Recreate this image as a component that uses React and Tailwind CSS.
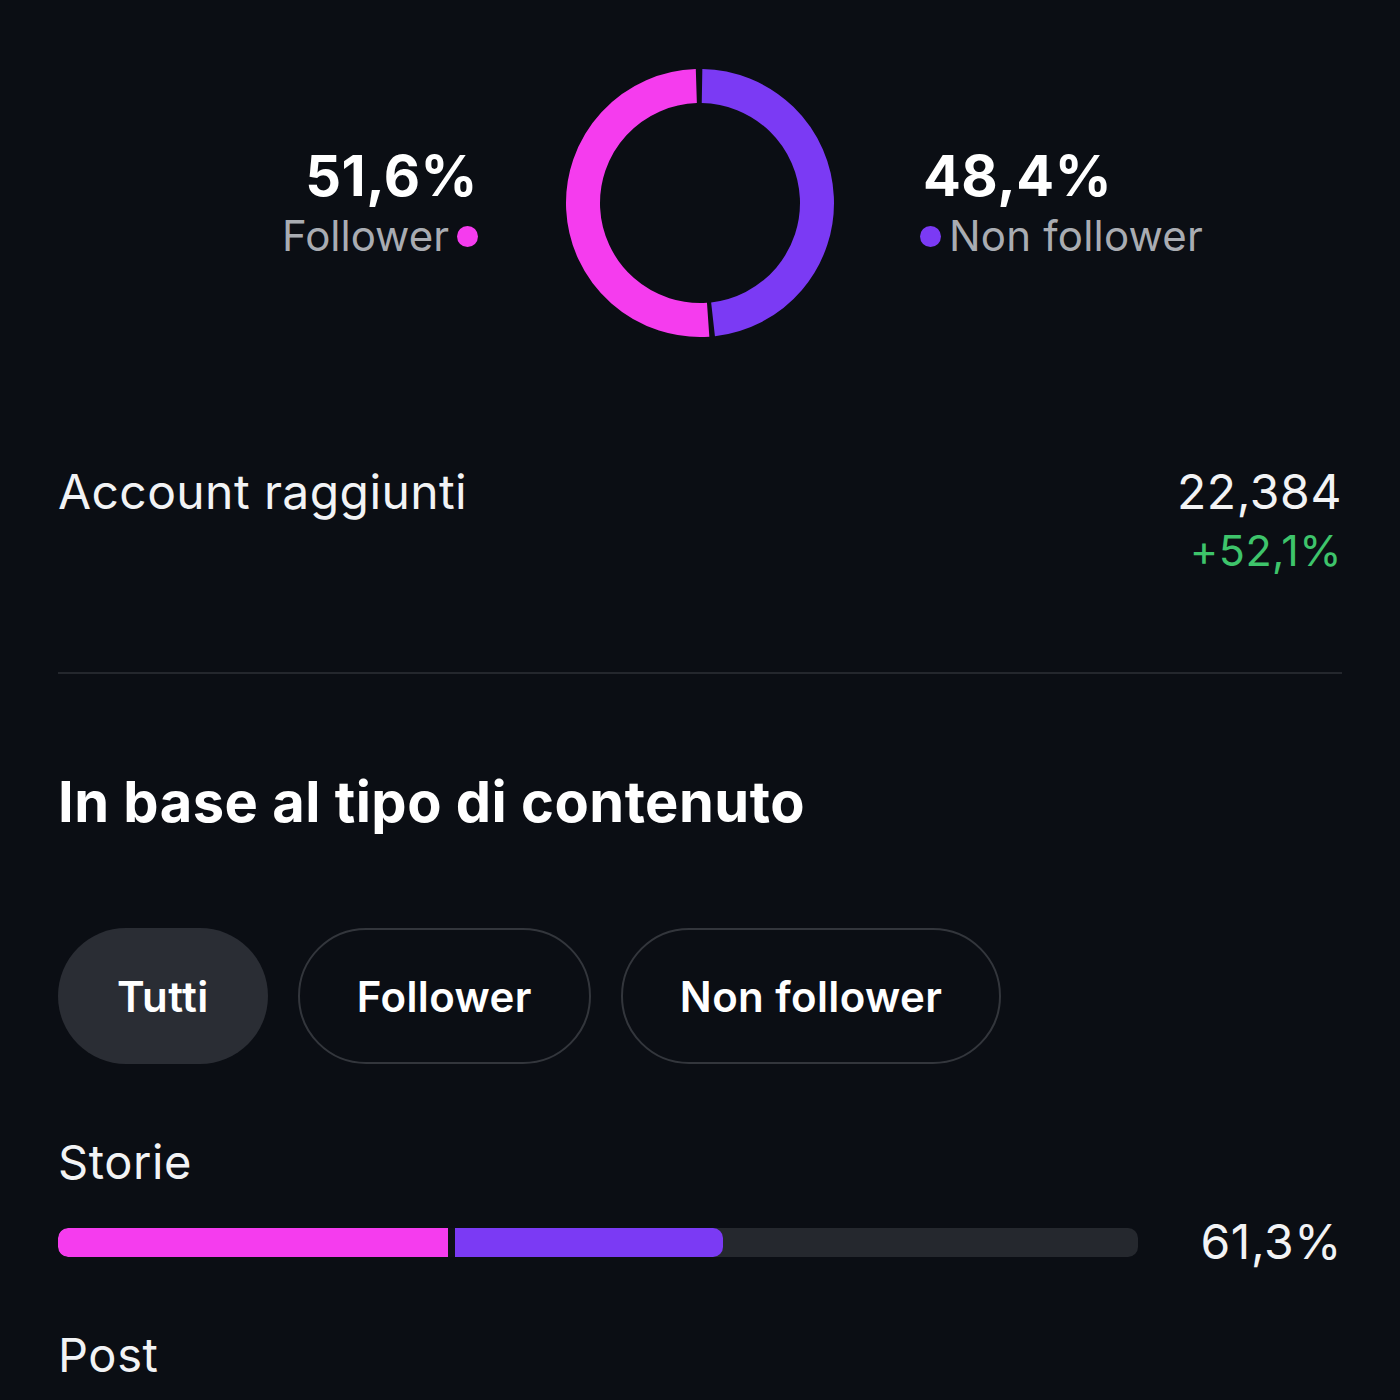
import React from 'react';

const FONT = { fontFamily: 'Inter, "Noto Sans", sans-serif' };

// point on the ring, angle measured clockwise from 12 o'clock
const pt = (cx, cy, r, deg) => {
  const a = (deg * Math.PI) / 180;
  return [cx + r * Math.sin(a), cy - r * Math.cos(a)];
};

const arc = (cx, cy, r, from, to) => {
  const [x1, y1] = pt(cx, cy, r, from);
  const [x2, y2] = pt(cx, cy, r, to);
  const large = to - from > 180 ? 1 : 0;
  return `M ${x1} ${y1} A ${r} ${r} 0 ${large} 1 ${x2} ${y2}`;
};

const Donut = () => (
  <svg width="270" height="270" viewBox="0 0 270 270">
    <path d={arc(135, 135, 117, 1, 173.6)} fill="none" stroke="#7b3af4" strokeWidth="34" />
    <path d={arc(135, 135, 117, 176, 358.2)} fill="none" stroke="#f53cee" strokeWidth="34" />
  </svg>
);

const Pill = ({ label, active }) => (
  <div
    className={`h-[136px] rounded-full flex items-center justify-center text-[42px] tracking-[0.4px] font-semibold text-white ${
      active ? 'bg-[#2a2d34] px-[59px]' : 'border-2 border-[#33363c] px-[57px]'
    }`}
  >
    {label}
  </div>
);

export default function App() {
  return (
    <div className="min-h-screen bg-[#0b0e14] text-white overflow-hidden" style={FONT}>
      {/* Donut + legend */}
      <div className="pt-[68px] grid grid-cols-[1fr_auto_1fr] items-center">
        <div className="flex flex-col items-end pr-[87px]">
          <div className="text-[56px] leading-[60px] font-bold tracking-[0.5px]">51,6%</div>
          <div className="mt-[6px] flex items-center text-[42px] leading-[48px] text-[#a9acb2]">
            <span>Follower</span>
            <span className="ml-[8px] w-[21px] h-[21px] rounded-full bg-[#f53cee]" />
          </div>
        </div>
        <Donut />
        <div className="flex flex-col items-start pl-[85px]">
          <div className="ml-[3px] text-[56px] leading-[60px] font-bold tracking-[0.5px]">48,4%</div>
          <div className="mt-[6px] flex items-center text-[42px] leading-[48px] tracking-[0.2px] text-[#a9acb2]">
            <span className="mr-[8px] w-[21px] h-[21px] rounded-full bg-[#7b3af4]" />
            <span>Non follower</span>
          </div>
        </div>
      </div>

      <div className="px-[58px]">
        {/* Account raggiunti */}
        <div className="mt-[126px] flex justify-between items-start">
          <div className="text-[48px] leading-[56px] tracking-[0.4px] text-[#f2f3f5]">Account raggiunti</div>
          <div className="flex flex-col items-end">
            <div className="text-[48px] leading-[56px] tracking-[0.6px] text-[#f2f3f5]">22,384</div>
            <div className="text-[43px] leading-[60px] tracking-[0.5px] text-[#3ec46b]">+52,1%</div>
          </div>
        </div>

        <div className="mt-[92px] h-[2px] bg-[#24272d]" />

        {/* Per tipo di contenuto */}
        <h2 className="mt-[96px] text-[56px] leading-[64px] font-bold tracking-[0.5px]">
          In base al tipo di contenuto
        </h2>

        <div className="mt-[94px] flex gap-[30px]">
          <Pill label="Tutti" active />
          <Pill label="Follower" />
          <Pill label="Non follower" />
        </div>

        <div className="mt-[70px] text-[47px] leading-[56px] tracking-[0.6px] text-[#f2f3f5]">Storie</div>
        <div className="mt-[24px] h-[56px] flex items-center justify-between">
          <div className="w-[1080px] h-[29px] rounded-[10px] bg-[#25282e] flex overflow-hidden">
            <div className="w-[390px] h-full bg-[#f53cee] rounded-l-[10px]" />
            <div className="w-[7px] h-full bg-[#0f1117]" />
            <div className="w-[268px] h-full bg-[#7b3af4] rounded-r-[10px]" />
          </div>
          <div className="text-[48px] leading-[56px] tracking-[0.6px] text-[#f2f3f5]">61,3%</div>
        </div>

        <div className="mt-[57px] text-[47px] leading-[56px] tracking-[0.6px] text-[#f2f3f5]">Post</div>
      </div>
    </div>
  );
}
